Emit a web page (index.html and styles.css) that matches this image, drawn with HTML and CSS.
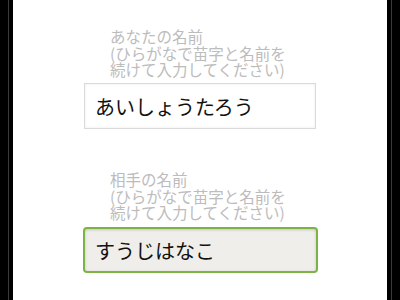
FILE: index.html
```html
<!DOCTYPE html>
<html lang="ja">
<head>
<meta charset="utf-8">
<link rel="stylesheet" href="styles.css">
</head>
<body>
<div class="frame">
  <div class="field first">
    <div class="label">
      <div class="line">あなたの名前</div>
      <div class="line">(ひらがなで苗字と名前を</div>
      <div class="line">続けて入力してください)</div>
    </div>
    <input class="box plain" type="text" value="あいしょうたろう">
  </div>
  <div class="field second">
    <div class="label">
      <div class="line">相手の名前</div>
      <div class="line">(ひらがなで苗字と名前を</div>
      <div class="line">続けて入力してください)</div>
    </div>
    <input class="box focus" type="text" value="すうじはなこ">
  </div>
</div>
</body>
</html>
```
FILE: styles.css
```css
html, body {
  margin: 0;
  padding: 0;
  background: #000;
  height: 300px;
  overflow: hidden;
}
.frame {
  width: 374px;
  height: 300px;
  margin: 0 auto;
  background: #fff;
  box-shadow: -4px 0 0 #000, -5px 0 0 #3a3a3a, 4px 0 0 #000, 5px 0 0 #3a3a3a;
  display: flex;
  flex-direction: column;
  font-family: "Noto Sans CJK JP", "Noto Sans", sans-serif;
}
.field {
  display: flex;
  flex-direction: column;
}
.field.first {
  padding-top: 28px;
}
.field.second {
  padding-top: 42px;
}
.label {
  margin-left: 97px;
  font-size: 15.5px;
  color: #bcbcbc;
  white-space: nowrap;
  display: flex;
  flex-direction: column;
}
.line {
  height: 16.7px;
  line-height: 16.7px;
  overflow: visible;
}
.box {
  box-sizing: border-box;
  font-family: "Noto Sans CJK JP", "Noto Sans", sans-serif;
  font-size: 20px;
  color: #111;
  outline: none;
  margin: 0;
}
.plain {
  margin-top: 5px;
  margin-left: 71px;
  width: 232px;
  height: 46px;
  border: 1px solid #dadada;
  background: #fff;
  padding: 0 0 0 10px;
  box-shadow: inset 0 0 3px rgba(0, 0, 0, 0.08);
}
.focus {
  margin-top: 6px;
  margin-left: 70px;
  width: 235px;
  height: 46px;
  border: 2px solid #7cb342;
  border-radius: 4px;
  background: #f0eeea;
  padding: 0 0 0 10px;
  box-shadow: inset 0 1px 3px rgba(0, 0, 0, 0.18);
}
```
